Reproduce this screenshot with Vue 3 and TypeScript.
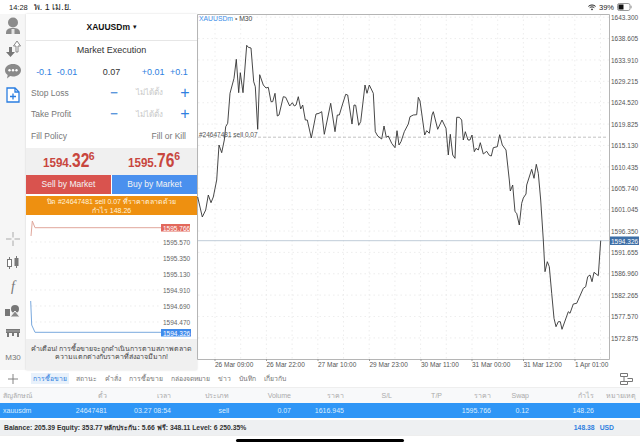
<script setup lang="ts">
const linePts: number[][] = [
  [197.7,197],[202.3,217],[205.7,210],[208.3,195],[211,202.7],[213.3,197],[216.7,180],[219,145],[221.7,152.7],[224.3,140],[225.7,126.7],[227.7,123.3],[230,93.3],[234,78.3],[236.3,59.3],[238.7,92.7],[240.3,72.7],[243,92.7],[246.7,45.3],[248.3,47.3],[251,48],[253.7,81.7],[255.3,86.7],[257.7,129.3],[259.7,74.7],[263.3,85],[266,88],[268.3,87.3],[271,101.7],[272.7,101.7],[275,93.3],[277.3,116],[279,115],[283.3,96.7],[285.7,97.3],[289.7,106],[292.3,102.7],[294.3,106],[296,105],[298.3,96.7],[300.7,109],[302.7,105],[305.3,120],[307.3,120],[311.3,138],[316,114],[319,113.3],[321.7,111.7],[324.3,134.3],[330.7,103.3],[335,131.7],[337.3,115],[339.3,115],[342,106],[345.7,94.3],[347.7,95],[352,124],[354,105],[355.7,105.3],[358.7,125.3],[360.7,121.7],[365,85],[367,93.3],[369.3,85],[373.3,93.3],[375.3,131.7],[377.7,136],[381.7,139],[384,126],[386.3,137.3],[388.3,136],[391.7,143.3],[395,147.7],[397,130.7],[399,145],[401,141.7],[404.3,131.7],[408.3,124],[410,116.7],[413.3,115],[416.7,114.7],[418.3,97.3],[420,101],[424.7,135],[426.7,130.7],[429.3,133.3],[432,115],[433.3,111.7],[437.7,129.3],[442,120],[446,128.3],[448.3,155],[450.3,134.3],[452.7,155],[455,158.3],[456.7,117.3],[459.3,117.3],[461.7,120],[463.3,140],[465.3,131.7],[468,140],[470,140],[472,135],[474.3,151.7],[476,148.3],[478.3,150],[480.3,142.7],[483.3,154],[486.7,151.3],[489.3,155.3],[491.3,156],[493.3,147.7],[497.3,146.7],[499.7,134.7],[502.3,145],[506,150],[509.3,180],[510.3,191],[512.7,185],[515,211.7],[516.7,213.3],[519.3,225],[521.7,203.3],[523.3,198],[526,194],[526.7,185],[531.7,169.3],[534,178.3],[536.3,164.3],[538.3,173.3],[540.7,200],[543.3,240],[545,271.7],[547.3,261.7],[549.3,266.7],[551.7,293.3],[554,318.3],[556,326.7],[558.3,321.7],[560.3,321.7],[562,329.3],[568.3,311.7],[570,313.3],[573.3,304],[576.7,303.3],[583.3,288.3],[585.7,286.7],[587.7,276.7],[590,275],[592,281.7],[594,272.3],[598.3,275.7],[600.7,240.7]
]
const linePath = linePts.map(p => p.join(',')).join(' ')

const prices = ['1643.300','1638.605','1633.910','1629.215','1624.520','1619.825','1615.130','1610.435','1605.740','1601.045','1596.350','1591.655','1586.960','1582.265','1577.570','1572.875']
const priceRows = prices.map((label, i) => ({ label, y: 17.2 + 21.38 * i }))
const gridY = priceRows.map(r => r.y)
const gridX = Array.from({ length: 16 }, (_, i) => 215 + 25.7 * i)
const times = [
  { x: 215, t: '26 Mar 09:00' }, { x: 266.5, t: '26 Mar 22:00' }, { x: 318, t: '27 Mar 10:00' }, { x: 369.5, t: '29 Mar 23:00' },
  { x: 421, t: '30 Mar 11:00' }, { x: 472, t: '31 Mar 00:00' }, { x: 523.5, t: '31 Mar 12:00' }, { x: 575, t: '1 Apr 01:00' }
]
const miniLabels = [
  { y: 244.5, t: '1595.570' }, { y: 260.5, t: '1595.350' }, { y: 276.5, t: '1595.130' }, { y: 292.5, t: '1594.910' },
  { y: 308.5, t: '1594.690' }, { y: 324.5, t: '1594.470' }
]
const tabs = ['สถานะ', 'คำสั่ง', 'การซื้อขาย', 'กล่องจดหมาย', 'ข่าว', 'บันทึก', 'เกี่ยวกับ']
const headers = ['สัญลักษณ์', 'ตั๋ว', 'เวลา', 'ประเภท', 'Volume', 'ราคา', 'S/L', 'T/P', 'ราคา', 'Swap', 'กำไร', 'หมายเหตุ']
const row = ['xauusdm', '24647481', '03.27 08:54', 'sell', '0.07', '1616.945', '', '', '1595.766', '0.12', '148.26', '']
</script>

<template>
  <div class="page">
    <header class="status">
      <span class="clock">14:28</span>
      <span class="date">พ. 1 เม.ย.</span>
      <span class="spacer"></span>
      <svg width="8" height="7" viewBox="0 0 8 7"><path d="M.4 2.400C2.500.500 5.500.500 7.600 2.400M1.700 3.700C3 2.600 5 2.600 6.300 3.700" fill="none" stroke="#222" stroke-width="1"/><path d="M4 6.600 2.800 5C3.500 4.500 4.500 4.500 5.200 5Z" fill="#222"/></svg>
      <span class="pct">39%</span>
      <svg width="15" height="8" viewBox="0 0 15 8"><rect x=".5" y=".5" width="12.5" height="7" rx="1.8" fill="#fff" stroke="#999"/><rect x="1.5" y="1.5" width="5" height="5" fill="#111"/><rect x="13.6" y="2.7" width="1" height="2.6" fill="#999"/></svg>
    </header>

    <main class="main">
      <nav class="rail">
        <div class="rail-top">
          <svg width="20" height="20" viewBox="0 0 20 20"><circle cx="10" cy="6.5" r="5" fill="#8b8b8b"/><path d="M3 17c0-4 3-5 7-5s7 1 7 5v1H3Z" fill="#8b8b8b"/><rect x="8.5" y="13" width="3" height="5" fill="#e4e4e4"/></svg>
          <svg width="18" height="18" viewBox="0 0 18 18"><path d="M5 7v5H2l4.500 5 4.500-5H8V7Z" fill="#777"/><path d="M12 12V6H9.500L13 1l3.500 5H14v6Z" fill="#fff" stroke="#888"/></svg>
          <svg width="18" height="18" viewBox="0 0 18 18"><path d="M9 2c4.500 0 8 2.600 8 6.200s-3.500 6.300-8 6.300c-1 0-2-.1-2.800-.4L3 16.500l.7-3.600C2 11.800 1 10.100 1 8.200 1 4.600 4.500 2 9 2Z" fill="#8a8a8a"/><circle cx="5.500" cy="8.200" r="1.200" fill="#fff"/><circle cx="9" cy="8.200" r="1.200" fill="#fff"/><circle cx="12.500" cy="8.200" r="1.200" fill="#fff"/></svg>
          <svg class="doc" width="14" height="16" viewBox="0 0 14 16"><path d="M1 1h8l4 4v10H1Z" fill="#fff" stroke="#2a7de1" stroke-width="1.300"/><path d="M9 1v4h4M7 6.500v6M4 9.500h6" fill="none" stroke="#2a7de1" stroke-width="1.300"/></svg>
        </div>
        <div class="rail-bottom">
          <svg width="14" height="14" viewBox="0 0 14 14"><path d="M7 0v5.500M7 8.500V14M0 7h5.500M8.500 7H14" stroke="#aaa" stroke-width="1" fill="none"/></svg>
          <svg width="14" height="14" viewBox="0 0 14 14"><path d="M3.500 1v12M10.500 0v12" stroke="#777"/><rect x="1.500" y="3.500" width="4" height="7" fill="#fff" stroke="#777"/><rect x="8.500" y="2" width="4" height="8" fill="#777"/></svg>
          <span class="fx">f</span>
          <svg width="18" height="14" viewBox="0 0 18 14"><rect x="1" y="5" width="5" height="7" fill="#777"/><circle cx="11" cy="5" r="4" fill="#777"/><path d="M6 13l5-6 5 6Z" fill="#888" stroke="#f6f6f6"/></svg>
          <svg width="16" height="10" viewBox="0 0 16 10"><rect x="1" y="1" width="14" height="4" fill="#777"/><path d="M3 1v8M8 1v7M13 1v8" stroke="#777" stroke-width="2"/><path d="M1 3h14" stroke="#ccc" stroke-width=".6"/></svg>
          <span class="tf">M30</span>
        </div>
      </nav>

      <section class="order">
        <div class="symbol">XAUUSDm <span class="caret">▾</span></div>
        <div class="exec">Market Execution</div>
        <div class="steps">
          <span class="blue w-a">-0.1</span>
          <span class="blue w-b">-0.01</span>
          <span class="vol">0.07</span>
          <span class="blue w-c">+0.01</span>
          <span class="blue w-a">+0.1</span>
        </div>
        <div class="line-row">
          <span class="lbl">Stop Loss</span>
          <span class="sign minus">−</span>
          <span class="unset">ไม่ได้ตั้ง</span>
          <span class="sign">+</span>
        </div>
        <div class="line-row">
          <span class="lbl">Take Profit</span>
          <span class="sign minus">−</span>
          <span class="unset">ไม่ได้ตั้ง</span>
          <span class="sign">+</span>
        </div>
        <div class="line-row policy">
          <span class="lbl">Fill Policy</span>
          <span class="lbl">Fill or Kill</span>
        </div>
        <div class="quotes">
          <div class="quote"><span class="int">1594.</span><span class="big">32</span><sup>6</sup></div>
          <div class="quote"><span class="int">1595.</span><span class="big">76</span><sup>6</sup></div>
        </div>
        <div class="trade">
          <div class="sell">Sell by Market</div>
          <div class="buy">Buy by Market</div>
        </div>
        <div class="close-btn">ปิด #24647481 sell 0.07 ที่ราคาตลาดด้วย<br>กำไร 148.26</div>
        <svg class="mini" width="171" height="123" viewBox="26 216 171 123">
          <path v-for="m in miniLabels" :key="m.t" :d="`M31 ${m.y - 2.500}H160`" stroke="#e4e4e4" stroke-width=".7" stroke-dasharray="1.500 3"/>
          <polyline points="31,236 32.300,221 35,227.700 161,227.700" fill="none" stroke="#e0a79c" stroke-width="1"/>
          <polyline points="30.700,301 31.700,325 35,332.300 161,332.300" fill="none" stroke="#7aa9de" stroke-width="1"/>
          <text v-for="m in miniLabels" :key="m.t + 'l'" x="163" :y="m.y" class="mini-t">{{ m.t }}</text>
          <rect x="161" y="224" width="29" height="7.500" fill="#e2685c"/>
          <text x="163" y="230.500" class="mini-t light">1595.766</text>
          <rect x="161" y="329" width="30" height="7.500" fill="#3f8bec"/>
          <text x="163" y="335.500" class="mini-t light">1594.326</text>
        </svg>
        <div class="warn">คำเตือน! การซื้อขายจะถูกดำเนินการตามสภาพตลาด<br>ความแตกต่างกับราคาที่ส่งอาจมีมาก!</div>
      </section>

      <svg class="chart" width="443" height="356" viewBox="197 14 443 356">
        <path v-for="y in gridY" :key="'h' + y" :d="`M198 ${y}H609`" stroke="#e8e8e8" stroke-width=".8" stroke-dasharray="1.500 3"/>
        <path v-for="x in gridX" :key="'v' + x" :d="`M${x} 15V359`" stroke="#e8e8e8" stroke-width=".8" stroke-dasharray="1.500 3"/>
        <path d="M197.500 359.500V14.500H609.500V359.500Z" fill="none" stroke="#b5b5b5"/>
        <path d="M198 137.200H607" stroke="#b4b4b4" stroke-width=".8" stroke-dasharray="3 2"/>
        <path d="M198 240.700H609" stroke="#bfccd8"/>
        <polyline :points="linePath" fill="none" stroke="#333" stroke-width=".9" stroke-linejoin="round"/>
        <text x="199" y="21" class="sym-t"><tspan fill="#3a8de8">XAUUSDm</tspan> <tspan fill="#777">•</tspan> M30</text>
        <text x="199" y="136.500" class="ax">#24647481 sell 0.07</text>
        <text v-for="r in priceRows" :key="r.label" x="611" :y="r.y + 2.700" class="ax">{{ r.label }}</text>
        <rect x="610" y="236.500" width="29" height="8.500" fill="#3d6ea6"/>
        <text x="611" y="243.500" class="ax light">1594.326</text>
        <template v-for="t in times" :key="t.t">
          <path :d="`M${t.x} 359V361`" stroke="#999"/>
          <text :x="t.x" y="366.500" class="ax">{{ t.t }}</text>
        </template>
      </svg>
    </main>

    <div class="tabs">
      <svg class="plus" width="10" height="10" viewBox="0 0 10 10"><path d="M5 0v10M0 5h10" stroke="#777" stroke-width=".9"/></svg>
      <span class="tab active">การซื้อขาย</span>
      <span v-for="t in tabs" :key="t" class="tab">{{ t }}</span>
      <span class="spacer"></span>
      <svg width="13" height="12" viewBox="0 0 13 12"><path d="M.500.500h7v3h-7ZM.500 8.500h7v3h-7ZM4 3.500v5M7.500 5.500h5v3h-5" fill="none" stroke="#777"/></svg>
    </div>
    <div class="grid head">
      <span v-for="(h, i) in headers" :key="i">{{ h }}</span>
    </div>
    <div class="grid data">
      <span v-for="(c, i) in row" :key="i">{{ c }}</span>
    </div>
    <footer class="balance">
      <span>Balance: 205.39 Equity: 353.77 หลักประกัน: 5.66 ฟรี: 348.11 Level: 6 250.35%</span>
      <span class="spacer"></span>
      <span class="pnl">148.38</span>
      <span class="pnl cur">USD</span>
    </footer>
    <div class="home-wrap"><div class="home"></div></div>
  </div>
</template>

<style>
html, body { margin: 0; background: #fff; }
</style>

<style scoped>
.page {
  width: 640px; height: 447px; overflow: hidden; display: flex; flex-direction: column;
  font-family: "Liberation Sans", "Noto Sans", "DejaVu Sans", sans-serif; color: #333; background: #fff;
}
.spacer { flex: 1; }
.status { height: 14px; display: flex; align-items: center; padding: 0 8px 0 9px; font-size: 7.500px; color: #222; gap: 3px; flex: none; }
.status .date { margin-left: 3px; font-size: 9px; }
.main { flex: none; height: 356px; display: flex; }
.rail { width: 26px; flex: none; background: #f6f6f6; display: flex; flex-direction: column; justify-content: space-between; align-items: center; }
.rail-top { display: flex; flex-direction: column; align-items: center; gap: 4px; padding-top: 2px; }
.doc { margin-top: 3px; }
.rail-bottom { display: flex; flex-direction: column; align-items: center; gap: 10px; padding-bottom: 8px; }
.fx { font-family: "Liberation Serif", serif; font-style: italic; font-size: 14px; line-height: 14px; color: #777; }
.tf { font-size: 8px; color: #777; margin-top: 5px; line-height: 9px; }
.order { width: 171px; flex: none; display: flex; flex-direction: column; background: #fff; box-shadow: 0 0 2px rgba(0,0,0,.15); }
.symbol { height: 26px; display: flex; align-items: center; justify-content: center; gap: 3px; font-size: 8.500px; font-weight: 700; color: #111; border-bottom: 1px solid #e6e6e6; }
.caret { font-size: 7px; }
.exec { text-align: center; font-size: 9px; color: #333; padding-top: 4px; height: 16px; }
.steps { height: 21px; display: flex; align-items: center; padding: 0 11px 0 10px; font-size: 9px; gap: 5px; }
.blue { color: #2f7fe0; text-align: center; }
.w-a { width: 16px; }
.w-b { width: 20px; }
.w-c { width: 24px; }
.vol { flex: 1; padding-left: 21px; color: #333; padding-right: 16px; text-align: center; }
.line-row { height: 21.500px; display: flex; align-items: center; padding: 0 3px 0 5px; font-size: 8.500px; }
.lbl { color: #777; }
.line-row .lbl:first-child { width: 74px; }
.sign { width: 18px; text-align: center; color: #2f7fe0; font-size: 16px; line-height: 16px; }
.minus { color: #5b96dc; font-weight: 700; font-size: 13px; }
.unset { flex: 1; text-align: center; color: #c8c8c8; font-size: 8px; }
.policy { justify-content: space-between; padding-right: 11px; }
.policy .lbl:first-child { width: auto; }
.quotes { height: 27px; margin-top: 1px; background: #f0f0f0; display: flex; align-items: center; }
.quote { flex: 1; display: flex; justify-content: center; align-items: baseline; color: #c8463e; font-size: 13.500px; font-weight: 700; line-height: 22px; white-space: nowrap; }
.int { width: 29px; transform: scaleX(.86); transform-origin: left; }
.big { width: 17px; font-size: 21px; transform: scaleX(.74); transform-origin: left; }
.quote sup { width: 6px; font-size: 10.500px; line-height: 0; transform: translateY(-7px); }
.trade { height: 19px; display: flex; font-size: 8.500px; color: #f4f4f4; }
.sell, .buy { display: flex; align-items: center; justify-content: center; font-weight: 500; }
.sell { width: 85px; background: #d9534e; }
.buy { flex: 1; background: #4a90ee; margin-left: 1px; }
.close-btn { margin-top: 2px; height: 19px; background: #ee9010; color: #fff3dc; font-size: 7px; line-height: 9px; text-align: center; padding-top: 1px; box-sizing: border-box; }
.mini { display: block; flex: none; margin-top: 1px; }
.mini-t { font-size: 6.500px; fill: #666; }
.mini-t.light { fill: #fff; }
.warn { flex: 1; background: #f0f0f0; font-size: 7px; line-height: 8.500px; text-align: center; color: #444; padding-top: 6px; box-sizing: border-box; }
.chart { display: block; flex: none; }
.ax { font-size: 6.500px; fill: #555; }
.ax.light { fill: #fff; }
.sym-t { font-size: 6.800px; fill: #444; }
.tabs { height: 18px; flex: none; display: flex; align-items: center; padding: 0 7px 0 8px; font-size: 6.800px; color: #777; gap: 6px; box-sizing: border-box; border-bottom: 1px solid #eee; }
.plus { margin-right: 7px; }
.tab { padding: 0 1px; line-height: 11px; }
.tab.active { color: #2f7fe0; background: #e8f1fb; padding: 0 2px; }
.grid { display: grid; grid-template-columns: 45px 63px 64px 58px 62px 53px 48px 50px 49px 38px 65px 42px; flex: none; align-items: center; font-size: 7px; }
.grid span { text-align: right; padding-right: 1px; white-space: nowrap; }
.grid span:first-child { text-align: left; padding-left: 3px; }
.head { height: 15px; background: #f8f9fa; color: #aaa; }
.data { height: 15px; background: #2f96f6; color: #dcedfd; }
.balance { flex: none; height: 15px; margin-top: 2px; display: flex; align-items: center; padding: 0 26px 0 4px; background: #eef0f2; font-size: 6.800px; font-weight: 700; color: #333; }
.pnl { color: #2f7fe0; }
.cur { margin-left: 5px; }
.home-wrap { flex: 1; display: flex; justify-content: center; padding-top: 3px; border-top: 1px solid #eee; }
.home { width: 168px; height: 3px; background: #000; border-radius: 2px; }
</style>
